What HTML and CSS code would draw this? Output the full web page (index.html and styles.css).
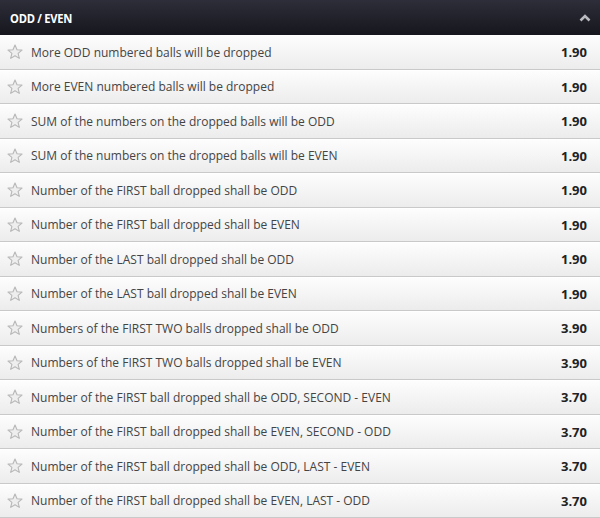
FILE: index.html
```html
<!DOCTYPE html>
<html lang="en">
<head>
  <meta charset="UTF-8">
  <title>Odd / Even</title>
  <link rel="stylesheet" href="styles.css">
</head>
<body>

  <div class="market">
    <div class="market-head">
      <span class="market-title">ODD / EVEN</span>
      <svg class="caret" width="12" height="8" viewBox="0 0 12 8">
        <path d="M1.5 6.5 L6 2 L10.5 6.5" fill="none" stroke="#b9b9c0" stroke-width="2.6"/>
      </svg>
    </div>

    <div class="rows" id="rows"></div>
  </div>

  <script>
    const bets = [
      ["More ODD numbered balls will be dropped", "1.90"],
      ["More EVEN numbered balls will be dropped", "1.90"],
      ["SUM of the numbers on the dropped balls will be ODD", "1.90"],
      ["SUM of the numbers on the dropped balls will be EVEN", "1.90"],
      ["Number of the FIRST ball dropped shall be ODD", "1.90"],
      ["Number of the FIRST ball dropped shall be EVEN", "1.90"],
      ["Number of the LAST ball dropped shall be ODD", "1.90"],
      ["Number of the LAST ball dropped shall be EVEN", "1.90"],
      ["Numbers of the FIRST TWO balls dropped shall be ODD", "3.90"],
      ["Numbers of the FIRST TWO balls dropped shall be EVEN", "3.90"],
      ["Number of the FIRST ball dropped shall be ODD, SECOND - EVEN", "3.70"],
      ["Number of the FIRST ball dropped shall be EVEN, SECOND - ODD", "3.70"],
      ["Number of the FIRST ball dropped shall be ODD, LAST - EVEN", "3.70"],
      ["Number of the FIRST ball dropped shall be EVEN, LAST - ODD", "3.70"]
    ];

    const star = '<svg class="star" width="16" height="16" viewBox="0 0 16 16">' +
      '<path d="M8 1 L10 5.8 L15 6.1 L11.1 9.4 L12.3 14.4 L8 11.7 L3.7 14.4 L4.9 9.4 L1 6.1 L6 5.8 Z" ' +
      'fill="#eeeeee" stroke="#b8b8b8" stroke-width="1.1" stroke-linejoin="round"/></svg>';

    const list = document.getElementById("rows");
    bets.forEach(bet => {
      const row = document.createElement("div");
      row.className = "row";
      row.innerHTML = star +
        '<span class="label">' + bet[0] + '</span>' +
        '<span class="odd">' + bet[1] + '</span>';
      list.appendChild(row);
    });
  </script>

</body>
</html>
```

FILE: styles.css
```css
body {
  margin: 0;
  padding: 0;
  font-family: 'Open Sans', 'DejaVu Sans', sans-serif;
  background: #ffffff;
}

.market {
  display: flex;
  flex-direction: column;
  width: 600px;
  height: 518px;
}

.market-head {
  display: flex;
  align-items: center;
  justify-content: space-between;
  height: 35px;
  padding: 0 9px 0 10px;
  background: linear-gradient(#2e2e3a, #16161d);
  flex-shrink: 0;
}

.market-title {
  color: #ffffff;
  font-size: 13px;
  font-weight: 700;
  letter-spacing: -0.3px;
  transform: scaleX(0.86);
  transform-origin: left center;
}

.caret {
  display: block;
}

.rows {
  display: flex;
  flex-direction: column;
  flex: 1;
}

.row {
  flex: 1;
  display: flex;
  align-items: center;
  padding: 0 13px 0 7px;
  background: linear-gradient(#fdfdfd, #ececec);
  border-bottom: 1px solid #c9c9c9;
  border-top: 1px solid #ffffff;
}

.star {
  display: block;
  margin-right: 8px;
  flex-shrink: 0;
}

.label {
  flex: 1;
  font-size: 12px;
  color: #444444;
}

.odd {
  font-size: 13px;
  font-weight: 700;
  color: #222222;
}
```
